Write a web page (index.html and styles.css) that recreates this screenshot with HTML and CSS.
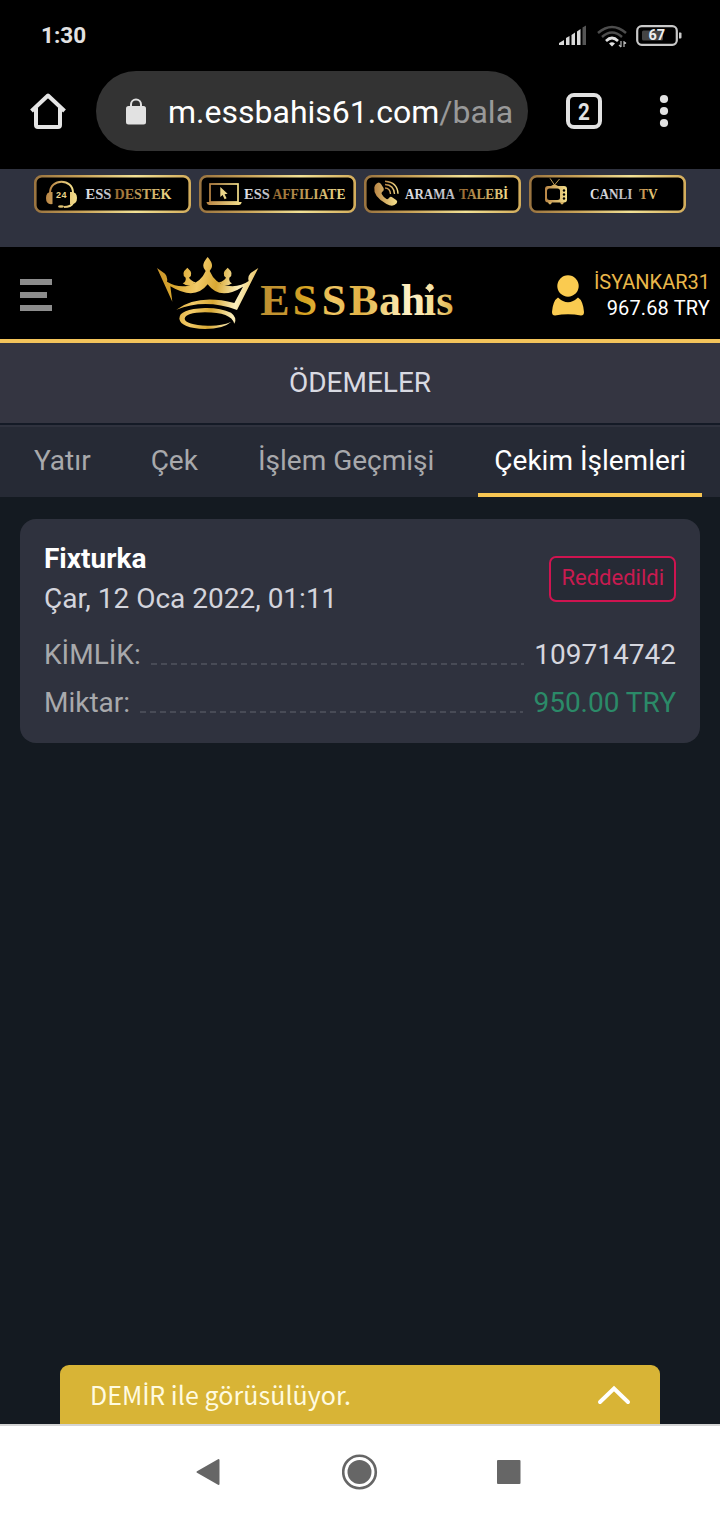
FILE: index.html
```html
<!DOCTYPE html>
<html lang="tr">
<head>
<meta charset="utf-8">
<title>Ödemeler</title>
<link rel="stylesheet" href="styles.css">
</head>
<body>
<svg class="defs" width="0" height="0" aria-hidden="true">
  <defs>
    <linearGradient id="frame" x1="0" y1="0" x2="1" y2="0"><stop offset="0" stop-color="#9a7440"/><stop offset=".3" stop-color="#c8a258"/><stop offset=".65" stop-color="#f3e296"/><stop offset="1" stop-color="#d3ad5c"/></linearGradient>
    <linearGradient id="gold" x1="0" y1="0" x2="1" y2="0"><stop offset="0" stop-color="#b98545"/><stop offset="1" stop-color="#f5e08c"/></linearGradient>
    <linearGradient id="label" x1="0" y1="0" x2="1" y2="0"><stop offset="0" stop-color="#95672f"/><stop offset="1" stop-color="#f0dc8c"/></linearGradient>
    <linearGradient id="silver" x1="0" y1="0" x2="1" y2="1"><stop offset="0" stop-color="#f4f4f7"/><stop offset="1" stop-color="#a7a8b0"/></linearGradient>
    <linearGradient id="crown" gradientUnits="userSpaceOnUse" x1="36" y1="90" x2="340" y2="150"><stop offset="0" stop-color="#c9952d"/><stop offset=".17" stop-color="#d9a62d"/><stop offset=".4" stop-color="#f2ca68"/><stop offset=".58" stop-color="#d8a833"/><stop offset=".8" stop-color="#fbefbd"/><stop offset="1" stop-color="#e5b84d"/></linearGradient>
    <linearGradient id="word" gradientUnits="userSpaceOnUse" x1="348" y1="0" x2="924" y2="0"><stop offset="0" stop-color="#bd9030"/><stop offset=".14" stop-color="#c79630"/><stop offset=".23" stop-color="#d5a31f"/><stop offset=".38" stop-color="#f0c765"/><stop offset=".52" stop-color="#dfb043"/><stop offset=".62" stop-color="#efcf78"/><stop offset=".78" stop-color="#fff3cc"/><stop offset=".9" stop-color="#f3dc91"/><stop offset="1" stop-color="#dcb048"/></linearGradient>
  </defs>
</svg>

<header class="status">
  <span class="clock">1:30</span>
  <svg class="status-icons" width="126" height="26" viewBox="0 0 126 26">
    <g fill="#d9d9d9"><path d="M1 22v-2l5-3v5z"/><path d="M8 22v-7l3.500-2v9z"/><path d="M13.500 22V12l3.500-2.500V22z"/><path d="M19 22V8.500L22.500 6v16z"/></g>
    <path fill="#555" d="M24.500 22V4.500L28 2.500V22z"/>
    <g fill="none" stroke="#4d4d4d" stroke-width="2.500"><path d="M40 10Q54-2 68 10"/><path d="M44 14Q54 5 64 14"/></g>
    <path d="M48 18Q54 12 60 18" fill="none" stroke="#e2e2e2" stroke-width="2.600"/>
    <path d="M51 20.500Q54 18 57 20.500L54 23.500z" fill="#e2e2e2"/>
    <path d="M63 18v6M61 22l2 2M66 18v6M66 18.500l2 2" stroke="#bbb" stroke-width="1.200" fill="none"/>
    <rect x="79.200" y="3.200" width="39.600" height="18.600" rx="4.500" fill="none" stroke="#c9c9c9" stroke-width="2.200"/>
    <rect x="84" y="7.500" width="21" height="10" rx="1.500" fill="#444"/>
    <path d="M121 9.500h1.500q1 0 1 1v4q0 1-1 1H121z" fill="#c9c9c9"/>
    <text x="90.500" y="17" class="battery">67</text>
  </svg>
</header>

<div class="browser">
  <svg class="home" width="36" height="36" viewBox="0 0 36 36"><path d="M1.500 18 18 2.500 34.500 18M6 15v17q0 2 2 2h20q2 0 2-2V15" fill="none" stroke="#e5e5e5" stroke-width="4" stroke-linejoin="round"/></svg>
  <div class="url">
    <svg width="20" height="27" viewBox="0 0 20 27"><path d="M5 9V6.500a5 5 0 0 1 10 0V9" fill="none" stroke="#e2e2e2" stroke-width="2"/><rect y="8" width="20" height="18.500" rx="2.500" fill="#e2e2e2"/></svg>
    <span class="address">m.essbahis61.com<span class="path">/bala</span></span>
  </div>
  <div class="tab-count"><span>2</span></div>
  <svg class="dots" width="10" height="34" viewBox="0 0 10 34" fill="#e2e2e2"><circle cx="5" cy="5" r="4.100"/><circle cx="5" cy="17" r="4.100"/><circle cx="5" cy="29" r="4.100"/></svg>
</div>

<nav class="promos">
  <svg class="promo" viewBox="0 0 157 38">
    <rect x="1.300" y="1.300" width="154.400" height="35.400" rx="6.500" fill="#000" stroke="url(#frame)" stroke-width="2.600"/>
    <path d="M16 18C16 3 39 3 39 18M39 28q-2 4-9 4" fill="none" stroke="url(#gold)" stroke-width="2"/>
    <path d="M18.500 17v12q-6.500 1-6.500-6t6.500-6M36 17v12q7 1 7-6t-7-6" fill="url(#gold)"/><ellipse cx="27" cy="31.500" rx="3" ry="1.300" fill="#e0c474"/>
    <text class="tiny" x="22" y="23.300" textLength="10.500">24</text>
    <text class="plabel" x="51.500" y="24.300" textLength="26" lengthAdjust="spacingAndGlyphs" fill="url(#silver)">ESS</text>
    <text class="plabel" x="80.500" y="24.300" textLength="57" lengthAdjust="spacingAndGlyphs" fill="url(#label)">DESTEK</text>
  </svg>
  <svg class="promo" viewBox="0 0 157 38">
    <rect x="1.300" y="1.300" width="154.400" height="35.400" rx="6.500" fill="#000" stroke="url(#frame)" stroke-width="2.600"/>
    <rect x="11" y="9" width="28" height="18" fill="none" stroke="url(#gold)" stroke-width="1.700"/>
    <path d="M7.500 27h35.200q-.5 3-3 3H10.500q-2.500 0-3-3z" fill="url(#gold)"/>
    <path d="M21.300 12v10l2.300-2 2 4.300 2-1-2-4 3-.5z" fill="#ead489"/>
    <text class="plabel" x="45" y="24.300" textLength="25.700" lengthAdjust="spacingAndGlyphs" fill="url(#silver)">ESS</text>
    <text class="plabel" x="73.500" y="24.300" textLength="73" lengthAdjust="spacingAndGlyphs" fill="url(#label)">AFFILIATE</text>
  </svg>
  <svg class="promo" viewBox="0 0 157 38">
    <rect x="1.300" y="1.300" width="154.400" height="35.400" rx="6.500" fill="#000" stroke="url(#frame)" stroke-width="2.600"/>
    <path d="M12 9q3-3 5 0l2.500 4q1 2.500-1.500 4-1 1 0 2.500 2 3.500 4.500 4.500 1.500.5 2.500-1 1.500-2 3.500-.5l4 2.700q1.500 1.500 0 3.300-3.500 4-10 .5Q9 21.500 10.300 12.500 10.700 10 12 9z" fill="url(#gold)"/>
    <path d="M21 13q5 0 5.500 6M21 9.500q9 .5 9.500 9.500M21 6.200q12.500 1 13 12.500" fill="none" stroke="url(#gold)" stroke-width="1.400"/>
    <text class="plabel" x="41" y="24.300" textLength="50" lengthAdjust="spacingAndGlyphs" fill="url(#silver)">ARAMA</text>
    <text class="plabel" x="95" y="24.300" textLength="49.300" lengthAdjust="spacingAndGlyphs" fill="url(#label)">TALEBİ</text>
  </svg>
  <svg class="promo" viewBox="0 0 157 38">
    <rect x="1.300" y="1.300" width="154.400" height="35.400" rx="6.500" fill="#000" stroke="url(#frame)" stroke-width="2.600"/>
    <path d="M21 3.300 25.500 10l5-6" fill="none" stroke="#b99855" stroke-width="1"/>
    <rect x="16" y="11" width="22" height="16.500" rx="3" fill="url(#gold)"/><path d="M19 27h4l-1 2.300h-2zM31 27h4l-1 2.300h-2zM22 11q3.500-3 7 0z" fill="#d3ad61"/>
    <rect x="18" y="13.500" width="13" height="11.500" rx="2.500" fill="#000"/><g fill="#000"><circle cx="35" cy="15.500" r="1.200"/><circle cx="35" cy="19.500" r="1.200"/><circle cx="35" cy="23.500" r="1.200"/></g>
    <text class="plabel" x="61" y="24.300" textLength="42.500" lengthAdjust="spacingAndGlyphs" fill="url(#silver)">CANLI</text>
    <text class="plabel" x="110" y="24.300" textLength="18.500" lengthAdjust="spacingAndGlyphs" fill="url(#gold)">TV</text>
  </svg>
</nav>

<div class="masthead">
  <div class="burger"><i></i><i></i><i></i></div>
  <svg class="logo" width="320" height="92" viewBox="0 6 960 276">
    <g fill="url(#crown)">
      <path d="M36 69 60 86Q69 96 66 110 98 129 130 122 168 112 182 78 165 62 188 36 211 62 194 78 210 115 245 122 284 128 311 108 307 95 317 84L340 69 276 195Q180 160 94 194 160 146 268 174L294 125Q225 168 188 118 150 168 76 124L82 170Z"/>
      <path d="M127 68Q106 86 122 98 124 110 113 115 132 130 153 112 138 108 132 98 148 86 127 68z"/>
      <path d="M248 68Q227 86 243 98 238 108 221 112 240 130 261 115 251 110 253 98 269 86 248 68z"/>
      <path d="M268 236Q278 218 258 203 226 188 180 189 102 192 103 221 107 249 180 252 235 252 258 231 225 244 188 242 121 239 119 221 121 203 180 202 258 202 268 236z"/>
    </g>
    <text class="wordmark" y="210" x="346 443 530 612 702 767 836 874" fill="url(#word)">ESSBahis</text>
    <path d="M854 115q4 10 14 14-10 4-14 14-4-10-14-14 10-4 14-14z" fill="#f7e6aa"/>
  </svg>
  <div class="account">
    <svg width="32" height="41" viewBox="0 0 32 41" fill="#facb50"><circle cx="16" cy="11" r="10.700"/><path d="M6 22.500Q16 32 26 22.500q5 3 6 14.500 0 3.500-3 3.500Q16 38 3 40.500q-3 0-3-3.500 1-11.500 6-14.500z"/></svg>
    <div class="who"><span class="name">İSYANKAR31</span><span class="sum">967.68 TRY</span></div>
  </div>
</div>

<h1 class="title">ÖDEMELER</h1>
<nav class="tabs">
  <a>Yatır</a><a>Çek</a><a>İşlem Geçmişi</a><a class="active">Çekim İşlemleri</a>
</nav>

<main class="content">
  <section class="card">
    <div class="card-head">
      <div><div class="provider">Fixturka</div><div class="date">Çar, 12 Oca 2022, 01:11</div></div>
      <span class="badge">Reddedildi</span>
    </div>
    <div class="row"><span>KİMLİK:</span><i class="leader"></i><b>109714742</b></div>
    <div class="row"><span>Miktar:</span><i class="leader"></i><b class="amount">950.00 TRY</b></div>
  </section>
  <div class="chat">
    <span>DEM<span class="dotted">İ</span>R ile görüsülüyor.</span>
    <svg width="34" height="20" viewBox="0 0 34 20"><path d="M3 17 17 3.500 31 17" fill="none" stroke="#fff" stroke-width="4" stroke-linecap="round"/></svg>
  </div>
</main>

<footer class="sysnav">
  <svg width="24" height="28" viewBox="0 0 24 28"><path d="M1.500 14 22.500 2v24z" fill="#666" stroke="#666" stroke-width="2" stroke-linejoin="round"/></svg>
  <svg width="36" height="36" viewBox="0 0 36 36"><circle cx="17.500" cy="18" r="16.300" fill="none" stroke="#666" stroke-width="2.600"/><circle cx="17.500" cy="18" r="12" fill="#666"/></svg>
  <svg width="24" height="24" viewBox="0 0 24 24"><rect width="23.500" height="24" rx="1" fill="#666"/></svg>
</footer>
</body>
</html>
```
FILE: styles.css
```css
* { box-sizing: border-box; }
body { margin: 0; width: 720px; height: 1520px; display: flex; flex-direction: column; overflow: hidden; background: #141a21; font-family: Roboto, sans-serif; }
svg { display: block; flex: none; }
.defs { position: absolute; }

.status { height: 71px; flex: none; display: flex; justify-content: space-between; align-items: flex-start; padding: 23px 36px 0 41px; background: #000; }
.clock { font-size: 22.5px; line-height: 25px; font-weight: 700; color: #e2e2e2; }
.battery { font-size: 14.5px; font-weight: 700; fill: #eee; }

.browser { height: 98px; flex: none; display: flex; align-items: center; padding: 0 51px 18px 30px; background: #000; }
.url { width: 432px; height: 80px; margin-left: 30px; padding-left: 30px; border-radius: 40px; background: #333; display: flex; align-items: center; gap: 22px; }
.address { font-size: 32px; color: #fff; white-space: nowrap; padding-top: 2px; }
.path { color: #999; }
.tab-count { width: 36px; height: 36px; margin-left: 38px; border: 4px solid #e2e2e2; border-radius: 8px; display: flex; align-items: center; justify-content: center; font-size: 24px; font-weight: 700; color: #e2e2e2; padding-top: 2px; }
.tab-count span { transform: scaleX(.86); }
.dots { margin-left: 57px; }

.promos { height: 78px; flex: none; display: flex; gap: 8px; padding: 6px 34px 0; background: #2f323f; }
.promo { width: 157px; height: 38px; }
.plabel { font: 700 15.6px "Liberation Serif", serif; }
.tiny { font: 700 9px "Liberation Sans", sans-serif; fill: #ecd58b; }

.masthead { height: 96px; flex: none; display: flex; align-items: center; background: #000; border-bottom: 4px solid #f3c45b; padding: 0 10px 0 20px; }
.burger { width: 32px; display: grid; gap: 7px; padding-top: 4px; }
.burger i { height: 6px; background: #8d8d8d; }
.burger i:nth-child(2) { width: 27px; }
.logo { margin-left: 93px; }
.wordmark { font: 700 132px "Liberation Serif", serif; }
.account { margin-left: auto; display: flex; align-items: center; gap: 10px; padding-top: 4px; }
.who { display: grid; justify-items: end; font-size: 20px; line-height: 26px; white-space: nowrap; }
.name { color: #e9b74a; }
.sum { color: #fff; letter-spacing: .15px; }

.title { height: 80px; flex: none; margin: 0; display: flex; align-items: center; justify-content: center; padding-bottom: 2px; font-size: 28px; font-weight: 400; color: #d9dae2; background: #343541; }
.tabs { height: 74px; flex: none; display: flex; border-top: 2px solid #141a26; background: #262a35; box-shadow: inset 0 2px #2f323e; font-size: 28px; color: #a8a9ac; padding: 2px 18px 0; gap: 28px; white-space: nowrap; }
.tabs a { display: flex; align-items: center; padding: 0 16px 4px; }
.tabs .active { color: #fff; border-bottom: 4px solid #f7c653; padding-bottom: 0; margin-left: auto; }

.content { flex: 1; display: flex; flex-direction: column; padding: 22px 20px 0; }
.card { height: 224px; border-radius: 16px; background: #2f323e; padding: 20px 24px 0; font-size: 28px; }
.card-head { display: flex; justify-content: space-between; line-height: 40px; height: 91px; }
.provider { font-weight: 700; color: #fff; }
.date { color: #d3d4dc; }
.badge { height: 46px; margin-top: 17px; padding: 0 10px 3px; border: 2px solid #cf1450; border-radius: 7px; background: #262a35; color: #c81b50; font-size: 22px; line-height: 39px; }
.row { display: flex; align-items: center; height: 48px; gap: 10px; color: #a8a9ac; }
.row b { font-weight: 400; color: #d5d6de; }
.row .amount { color: #2b8a68; }
.leader { flex: 1; height: 2px; margin-top: 19px; background: repeating-linear-gradient(90deg, #484b56 0 6px, transparent 6px 10px); }
.chat { height: 59px; margin: auto 40px 0; border-radius: 9px 9px 0 0; background: #d8b436; display: flex; align-items: center; justify-content: space-between; padding: 0 29px 0 30px; color: #fffbe0; font: 25px/36px "Noto Sans CJK SC", sans-serif; letter-spacing: .05px; }
.chat > span { padding-top: 2px; }
.dotted { font-family: Roboto, sans-serif; }

.sysnav { height: 96px; flex: none; background: #fff; border-top: 2px solid #d4d4d4; display: flex; align-items: center; padding: 0 0 2px 196px; }
.sysnav svg:nth-child(2) { margin-left: 122px; }
.sysnav svg:nth-child(3) { margin-left: 119px; }
```
